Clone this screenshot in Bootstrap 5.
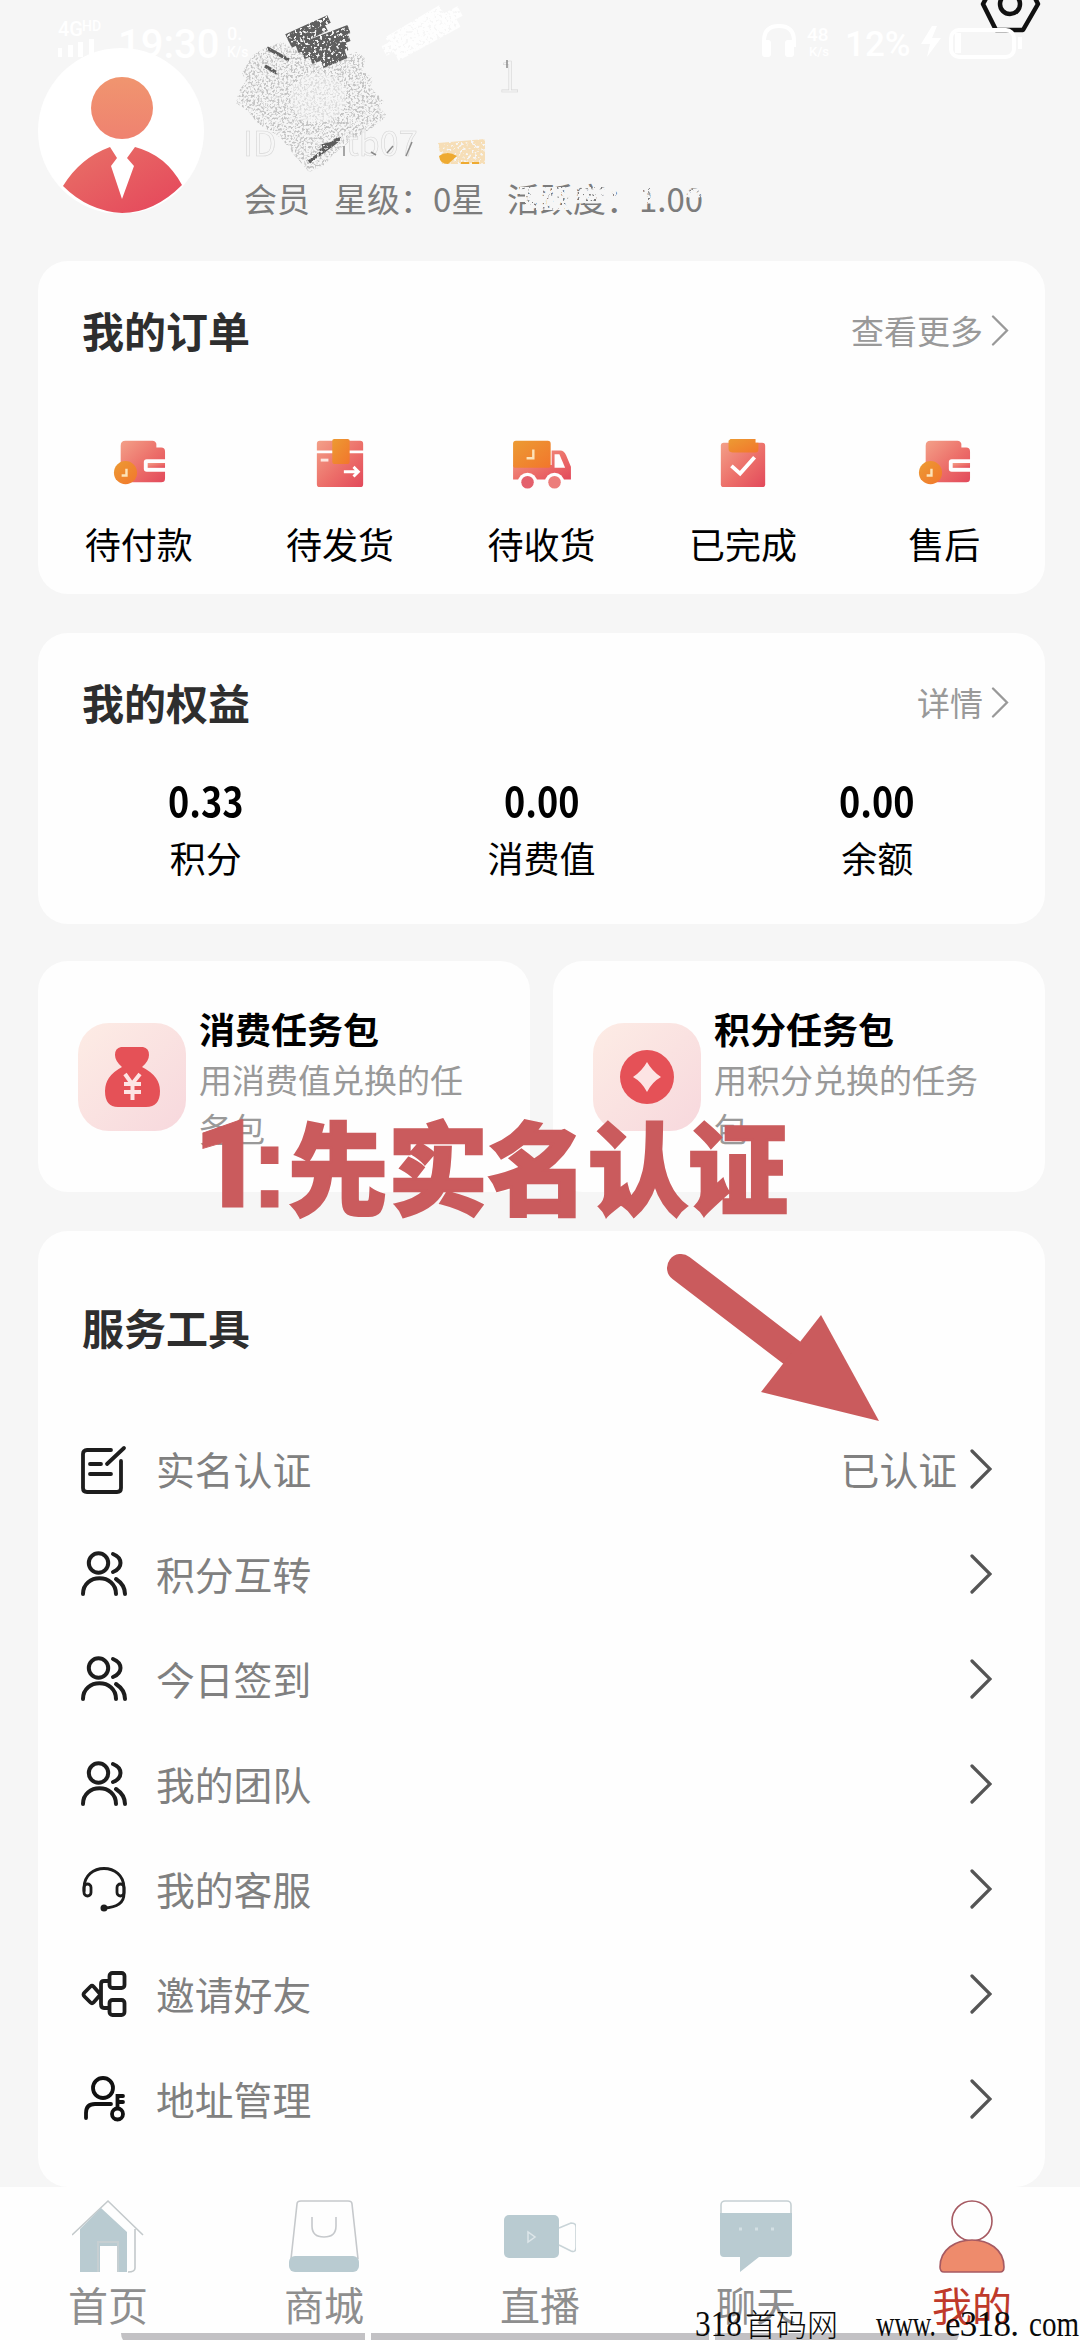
<!DOCTYPE html>
<html lang="zh-CN">
<head>
<meta charset="utf-8">
<meta name="viewport" content="width=device-width, initial-scale=1">
<title>我的</title>
<link href="https://cdn.jsdelivr.net/npm/bootstrap@5.3.0/dist/css/bootstrap.min.css" rel="stylesheet">
<style>
body{background:#f6f6f6;font-family:"Noto Sans CJK SC","Noto Sans",sans-serif;color:#000;width:1080px;height:2340px;overflow:hidden;position:relative}
svg{display:block;flex:none}
.page-head{height:261px;padding:47px 38px 0}
.avatar{width:166px;height:166px}
.member{font-size:33px;line-height:50px;color:#7c7c7c;white-space:pre}
.head-text{padding:126px 0 0 40px}
.status-layer,.scribble{position:absolute;left:0;top:0}
.panel{background:#fefefe;border:0;border-radius:30px;margin:0 35px 0 38px}
.p-title{font-size:42px;line-height:60px;font-weight:700;color:#2e2e2e}
.p-more{font-size:33px;line-height:50px;color:#999}
.p-head{padding:39px 36px 0 44px}
.orders{height:333px;margin-bottom:39px}
.order-item{font-size:36px;line-height:54px}
.order-item span{margin-top:26px}
.rights{height:291px;margin-bottom:37px}
.num{font-size:41px;line-height:54px;font-weight:700;transform:scaleX(.88);margin-bottom:4px}
.lbl{font-size:36px;line-height:54px}
.tasks{margin:0 35px 39px 38px;gap:23px}
.task{background:#fefefe;border-radius:30px;height:231px;flex:1 1 0;padding:0 30px 0 40px;gap:13px}
.task h3{font-size:36px;line-height:54px;font-weight:700;margin:0}
.task p{font-size:33px;line-height:49px;color:#999;margin:0;width:270px}
.tools{height:956px;padding-top:66px}
.tools .p-title{padding-left:44px;margin-bottom:59px}
.tool{height:105px;padding:0 53px 0 43px;font-size:38.8px;color:#808080}
.tool .name{margin:-1px auto 0 29px}
.tool .state{margin:-1px 13px 0 0}
.tabs{height:153px;background:#fefefe}
.tab{font-size:40px;line-height:56px;color:#8e8e8e;padding-top:12px}
.tab svg{margin-bottom:3px}
.tab.on{color:#bf3a2b}
.slogan{position:absolute;left:197px;top:1089px;font-size:100px;line-height:150px;font-weight:900;color:#ca5b5d;-webkit-text-stroke:2.5px #ca5b5d;white-space:nowrap}
.slogan b{font-family:Roboto,sans-serif;font-weight:900;font-size:122px;line-height:150px;display:inline-block;-webkit-text-stroke:1px #ca5b5d}
.slogan .one{width:58px;text-indent:-4px}
.slogan .colon{width:33px;font-family:"Liberation Sans",sans-serif;font-weight:700;font-size:118px;text-indent:-5px}
.pointer{position:absolute;left:650px;top:1240px}
.marks{position:absolute;left:0;bottom:0}
</style>
</head>
<body>
<svg width="0" height="0" class="position-absolute">
 <defs>
  <linearGradient id="gr" x1="0" y1="0" x2="1" y2="1"><stop offset="0" stop-color="#f3a088"/><stop offset=".55" stop-color="#ec6e69"/><stop offset="1" stop-color="#e2495b"/></linearGradient>
  <linearGradient id="go" x1="0" y1="0" x2="1" y2="1"><stop offset="0" stop-color="#ec9b33"/><stop offset="1" stop-color="#f2762c"/></linearGradient>
  <linearGradient id="gh" x1="0" y1="0" x2="0" y2="1"><stop offset="0" stop-color="#f0956f"/><stop offset="1" stop-color="#ef8270"/></linearGradient>
  <linearGradient id="gb" x1="0" y1="0" x2="1" y2="1"><stop offset="0" stop-color="#e87267"/><stop offset="1" stop-color="#e5455b"/></linearGradient>
  <linearGradient id="gp" x1="0" y1="0" x2="1" y2="1"><stop offset="0" stop-color="#fdece5"/><stop offset="1" stop-color="#f7d8dd"/></linearGradient>
  <filter id="grain" x="-10%" y="-10%" width="120%" height="120%"><feTurbulence type="fractalNoise" baseFrequency=".45" numOctaves="2" seed="4"/><feColorMatrix values="0 0 0 0 0 0 0 0 0 0 0 0 0 0 0 5 0 0 0 -2.3"/><feComposite in="SourceGraphic" operator="in"/></filter>
  <filter id="grain2" x="-10%" y="-10%" width="120%" height="120%"><feTurbulence type="fractalNoise" baseFrequency=".35" numOctaves="2" seed="9"/><feColorMatrix values="0 0 0 0 0 0 0 0 0 0 0 0 0 0 0 9 0 0 0 -3"/><feComposite in="SourceGraphic" operator="in"/></filter>
  <symbol id="wallet" viewBox="0 0 56 56">
   <path fill="url(#gr)" d="M9 10q0-5 5-5h28q3 0 4 3v4h5q4 0 4 4v8H36q-3 0-3 3v7q0 3 3 3h19v7q0 4-4 4H13q-4 0-4-4z"/>
   <path fill="url(#gr)" d="M37 28h18v5H37z"/><circle cx="14" cy="38" r="12" fill="url(#go)"/><path d="M15 34v7h-5" fill="none" stroke="#fde3b8" stroke-width="2.5"/>
  </symbol>
  <symbol id="parcel" viewBox="0 0 56 56">
   <path fill="url(#gr)" d="M4 15V8q0-3 3-3h42q3 0 3 3v7zM4 18h48v32q0 3-3 3H7q-3 0-3-3z"/>
   <rect x="20" y="3" width="18" height="26" rx="2" fill="url(#go)"/><path d="M8 25h8" stroke="#fde6e0" stroke-width="3"/><path d="M32 37h14m-4-5 5 5-5 5" fill="none" stroke="#fff" stroke-width="3"/>
  </symbol>
  <symbol id="truck" viewBox="0 0 60 56">
   <path fill="url(#gr)" d="M0 30h40V15h9q4 0 6 5l5 12v13H0z"/><path fill="#fefefe" d="M43 19h5l6 14H43z"/>
   <rect y="5" width="39" height="28" rx="3" fill="url(#go)"/><path d="M21 14v9h-7" fill="none" stroke="#fde3b8" stroke-width="2.5"/>
   <circle cx="15" cy="48" r="10" fill="#fefefe"/><circle cx="43" cy="48" r="10" fill="#fefefe"/><circle cx="15" cy="48" r="6.5" fill="#e4606c"/><circle cx="43" cy="48" r="6.5" fill="#ec7d7b"/>
  </symbol>
  <symbol id="done" viewBox="0 0 56 56">
   <rect x="5" y="7" width="46" height="46" rx="3" fill="url(#gr)"/><path fill="url(#go)" d="M15 3h26v4h3v7q0 3-3 3H17q-4 0-4-4V5z"/><path d="m16 31 9 8 15-17" fill="none" stroke="#fff" stroke-width="4"/>
  </symbol>
  <symbol id="chev" viewBox="0 0 22 40"><path d="M2 2 20 20 2 38" fill="none" stroke="currentColor" stroke-linecap="round"/></symbol>
  <symbol id="form" viewBox="0 0 46 50"><g fill="none" stroke="#1d1d1d" stroke-width="3.8" stroke-linecap="round"><path d="M30 6H6q-4 0-4 4v34q0 4 4 4h30q4 0 4-4V17M26 20 43 4M9 20h11M9 30h21"/></g></symbol>
  <symbol id="people" viewBox="0 0 46 46"><g fill="none" stroke="#1d1d1d" stroke-width="4" stroke-linecap="round"><circle cx="17.500" cy="12" r="9.700"/><path d="M2 43c0-21 33-21 33 0M32 3c10 4 10 14 0 18M35 28q9 6 9 15"/></g></symbol>
  <symbol id="headset" viewBox="0 0 46 46"><g fill="none" stroke="#1d1d1d" stroke-width="2.800" stroke-linecap="round"><path d="M3 25v-3C3-4 43-4 43 22v6Q43 41 23 42"/><rect x="3" y="18" width="7" height="12" rx="3.500"/><rect x="36" y="18" width="7" height="12" rx="3.500"/></g><circle cx="23" cy="42" r="3.500" fill="#1d1d1d"/></symbol>
  <symbol id="share" viewBox="0 0 46 46"><g fill="none" stroke="#1d1d1d" stroke-width="3.800"><rect x="28.500" y="2" width="15" height="15" rx="3"/><rect x="28.500" y="29" width="15" height="15" rx="3"/><path d="M28 10h-5q-3 0-3 3v20q0 4 3 4h5M2.500 23.500q0-1 1-2l6-6q1.500-1.500 3 0l7 8-7 8q-1.500 1.500-3 0l-6-6q-1-1-1-2z"/></g></symbol>
  <symbol id="userkey" viewBox="0 0 46 46"><g fill="none" stroke="#111" stroke-width="3.800" stroke-linecap="round"><circle cx="22" cy="12" r="10"/><path d="M5 42v-5q0-9 9-9h16"/><circle cx="36.500" cy="38" r="5.500"/><path d="M36.500 32V20H42M37 26h5"/></g></symbol>
 </defs>
</svg>

<header class="page-head d-flex">
 <svg class="avatar" viewBox="38 47 166 166"><circle cx="121" cy="131" r="83" fill="#fff"/><circle cx="122" cy="108" r="31" fill="url(#gh)"/>
  <path fill="url(#gb)" d="M63 186Q80 158 110 147l7 11-6 8 11 33 12-33-7-8 8-11q31 8 47 38-28 28-60 28-34-2-59-27z"/></svg>
 <div class="head-text"><div class="member d-flex"><span style="width:90px">会员</span><span style="width:173px">星级：0星</span><span>活跃度：1.00</span></div></div>
</header>
<svg class="scribble" width="1080" height="240">
 <g filter="url(#grain)"><path fill="#999" opacity=".55" d="M252 56l12-8 18-6 20 12 18 12 22-9 15-5 8 6-2 12 10 9-3 8 14 14-5 6 8 9-15 12-17 10-14 10-18 18-14 6-14-16-14-18-24-15-9-12-12-8 3-12 7-10-4-8z"/></g>
 <ellipse cx="318" cy="98" rx="28" ry="25" fill="#f6f6f6" opacity=".5"/>
 <g filter="url(#grain2)" fill="none" stroke="#5e5e5e" stroke-width="8.500"><path d="M287 38l42-19M290 44l36-17M297 49l52-20M303 55l46-18M311 60l36-14M322 64l24-10"/></g>
 <g filter="url(#grain2)" stroke="#5c5c5c" stroke-width="3.500" fill="none"><path d="M267 48l22 12M265 66l12 7M309 162l32-24M320 151l18-12M322 146l12-3"/></g>
 <g filter="url(#grain2)" fill="none" stroke="#fefefe" stroke-width="11"><path d="M388 42l54-32M384 51l76-40M396 56l62-34"/></g>
 <g font-size="34" fill="#f6f6f6" stroke="#c9c9c9" stroke-width=".6" opacity=".7"><text x="243" y="156">ID</text><text x="346" y="156">tb07</text><text x="498" y="92" font-size="42" font-weight="300">1</text></g>
 <path d="M344 146v10M371 152l5 3M387 153l6-7M406 156l6-14M507 60v8" stroke="#8a8a8a" stroke-width="1.500" fill="none"/>
 <g filter="url(#grain2)"><path fill="#f7c877" d="M438 143l47-4v25h-43z" opacity=".5"/></g><path fill="#eeaa31" d="M439 156q8-6 18 0l-9 8q-8 0-9-8zM461 162h8v2h-8zM472 162h7v2h-7z"/>
 <g filter="url(#grain2)" stroke="#f6f6f6" stroke-width="9"><path d="M520 190h96M525 199h102M524 208h50M641 189h26M643 199h16M685 193h18"/></g>
</svg>
<svg class="status-layer" width="1080" height="80" font-family="Roboto,sans-serif">
 <g fill="none" stroke="#111" stroke-width="4.500" stroke-linejoin="round"><path d="M983 4 997-22h28L1038 4l-15 26h-27z"/><circle cx="1010" cy="4" r="10"/></g>
 <g fill="#fff" font-weight="500"><text x="58" y="36" font-size="20">4G</text><text x="82" y="31" font-size="14">HD</text><path d="M58 48h4v9h-4zM68 45h5v12h-5zM78 42h5v15h-5zM89 39h5v18h-5z"/><text x="118" y="58" font-size="40">19:30</text><text x="227" y="40" font-size="18">0.</text><text x="227" y="57" font-size="14">K/s</text>
  <path d="M764 47V41q0-15 15-15t15 15v6" fill="none" stroke="#fff" stroke-width="4"/><rect x="762" y="40" width="9" height="17" rx="3"/><rect x="785" y="40" width="9" height="17" rx="3"/>
  <text x="807" y="41" font-size="19">48</text><text x="809" y="56" font-size="13">K/s</text><text x="845" y="56" font-size="35">12%</text><path d="m932 26-11 18h9l-3 13 14-19h-9l5-12z"/></g>
 <rect x="951" y="30" width="63" height="27" rx="8" fill="none" stroke="#fff" stroke-width="4"/><path d="M955 33h6v20h-6zM1018 37h4v12h-4z" fill="#fff"/>
</svg>

<section class="panel orders">
 <div class="p-head d-flex justify-content-between align-items-center"><div class="p-title">我的订单</div><div class="p-more d-flex align-items-center gap-2">查看更多 <svg width="18" height="31" stroke-width="3"><use href="#chev"/></svg></div></div>
 <div class="d-flex text-center" style="padding-top:76px">
  <div class="order-item col d-flex flex-column align-items-center"><svg width="54" height="54"><use href="#wallet"/></svg><span>待付款</span></div>
  <div class="order-item col d-flex flex-column align-items-center"><svg width="54" height="54"><use href="#parcel"/></svg><span>待发货</span></div>
  <div class="order-item col d-flex flex-column align-items-center"><svg width="58" height="54"><use href="#truck"/></svg><span>待收货</span></div>
  <div class="order-item col d-flex flex-column align-items-center"><svg width="54" height="54"><use href="#done"/></svg><span>已完成</span></div>
  <div class="order-item col d-flex flex-column align-items-center"><svg width="54" height="54"><use href="#wallet"/></svg><span>售后</span></div>
 </div>
</section>

<section class="panel rights">
 <div class="p-head d-flex justify-content-between align-items-center"><div class="p-title">我的权益</div><div class="p-more d-flex align-items-center gap-2">详情 <svg width="18" height="31" stroke-width="3"><use href="#chev"/></svg></div></div>
 <div class="d-flex text-center" style="padding-top:40px">
  <div class="col"><div class="num">0.33</div><div class="lbl">积分</div></div>
  <div class="col"><div class="num">0.00</div><div class="lbl">消费值</div></div>
  <div class="col"><div class="num">0.00</div><div class="lbl">余额</div></div>
 </div>
</section>

<div class="tasks d-flex">
 <div class="task d-flex align-items-center">
  <svg width="108" height="108"><rect width="108" height="108" rx="31" fill="url(#gp)"/><path fill="#e55157" d="M43 24h22q6 1 6 8 0 6-7 12 18 9 18 24 0 16-14 16H40q-13 0-13-16 0-15 17-24-7-6-7-12 0-7 6-8z"/><path d="m47 51 7 10 8-10M46 61h17M46 69h17M54.500 61v16" fill="none" stroke="#fde4e4" stroke-width="4"/></svg>
  <div><h3>消费任务包</h3><p>用消费值兑换的任务包</p></div>
 </div>
 <div class="task d-flex align-items-center">
  <svg width="108" height="108"><rect width="108" height="108" rx="31" fill="url(#gp)"/><circle cx="54" cy="54" r="27" fill="#e55157"/><path fill="#fde4e4" d="M54 39q5 9 14 15-9 5-14 15-5-10-14-15 9-6 14-15z"/></svg>
  <div><h3>积分任务包</h3><p>用积分兑换的任务包</p></div>
 </div>
</div>

<section class="panel tools">
 <div class="p-title">服务工具</div>
 <div class="tool d-flex align-items-center"><svg width="46" height="50"><use href="#form"/></svg><span class="name">实名认证</span><span class="state">已认证</span><svg width="22" height="40" stroke-width="3.200" color="#555"><use href="#chev"/></svg></div>
 <div class="tool d-flex align-items-center"><svg width="46" height="46"><use href="#people"/></svg><span class="name">积分互转</span><svg width="22" height="40" stroke-width="3.200" color="#555"><use href="#chev"/></svg></div>
 <div class="tool d-flex align-items-center"><svg width="46" height="46"><use href="#people"/></svg><span class="name">今日签到</span><svg width="22" height="40" stroke-width="3.200" color="#555"><use href="#chev"/></svg></div>
 <div class="tool d-flex align-items-center"><svg width="46" height="46"><use href="#people"/></svg><span class="name">我的团队</span><svg width="22" height="40" stroke-width="3.200" color="#555"><use href="#chev"/></svg></div>
 <div class="tool d-flex align-items-center"><svg width="46" height="46"><use href="#headset"/></svg><span class="name">我的客服</span><svg width="22" height="40" stroke-width="3.200" color="#555"><use href="#chev"/></svg></div>
 <div class="tool d-flex align-items-center"><svg width="46" height="46"><use href="#share"/></svg><span class="name">邀请好友</span><svg width="22" height="40" stroke-width="3.200" color="#555"><use href="#chev"/></svg></div>
 <div class="tool d-flex align-items-center"><svg width="46" height="46"><use href="#userkey"/></svg><span class="name">地址管理</span><svg width="22" height="40" stroke-width="3.200" color="#555"><use href="#chev"/></svg></div>
</section>

<nav class="tabs d-flex">
 <div class="tab col d-flex flex-column align-items-center"><svg width="72" height="74" viewBox="0 0 72 74"><path d="M0 36 36 2l35 34M63 30v39q0 4-7 4" fill="none" stroke="#c3c9cb" stroke-width="1.600"/><path fill="#b9cbd1" d="M8 30 29 9l26 24v40H45V47H28v26H8z"/><path d="M26 73V43h20v30" fill="none" stroke="#c6cfd2" stroke-width="2"/></svg>首页</div>
 <div class="tab col d-flex flex-column align-items-center"><svg width="72" height="74" viewBox="0 0 72 74"><path d="M3 60 9 5q0-3 4-3h47q4 0 4 3l6 55M24 18v9q0 11 12 11t12-11v-9" fill="none" stroke="#c6c9cc" stroke-width="1.600"/><rect x="1" y="57" width="70" height="16" rx="6" fill="#b9cbd1"/></svg>商城</div>
 <div class="tab col d-flex flex-column align-items-center"><svg width="72" height="74" viewBox="0 0 72 74"><rect y="16" width="55" height="43" rx="5" fill="#b9cbd1"/><path d="M55 29l12-5q5 0 5 4v20q0 6-5 4l-12-6" fill="none" stroke="#c9d4d8" stroke-width="1.600"/><path d="M24 33v10l7-5z" fill="none" stroke="#dde6e9" stroke-width="1.500"/></svg>直播</div>
 <div class="tab col d-flex flex-column align-items-center"><svg width="72" height="74" viewBox="0 0 72 74"><rect x="1" y="2" width="70" height="40" rx="4" fill="none" stroke="#c6d0d3" stroke-width="1.600"/><path fill="#b9cbd1" d="M0 14h72v40q0 4-4 4H39L20 73V58H4q-4 0-4-4z"/><path d="M19 30h3M35 30h3M51 30h3" stroke="#d3dfe3" stroke-width="3"/></svg>聊天</div>
 <div class="tab on col d-flex flex-column align-items-center"><svg width="72" height="74" viewBox="0 0 72 74"><g stroke="#a65a62" stroke-width="1.600"><circle cx="36" cy="22" r="20" fill="none"/><path fill="#ee8b6c" d="M4 68C4 32 68 32 68 68q0 5-4 5H8q-4 0-4-5z"/></g></svg>我的</div>
</nav>

<div class="slogan"><b class="one">1</b><b class="colon">:</b>先实名认证</div>
<svg class="pointer" width="240" height="190" viewBox="650 1240 240 190"><path d="M681 1268 800 1359" stroke="#ca5b5d" stroke-width="28" stroke-linecap="round"/><path fill="#ca5b5d" d="M821 1315 879 1421 761 1392z"/></svg>
<svg class="marks" width="1080" height="40" viewBox="0 2300 1080 40">
 <path fill="#c2c1c4" d="M121 2333h244v7H123q-2-3-2-7zM371 2333h338v7H371zM715 2333h244q0 4-2 7H715z"/>
 <g fill="#0a0a0a" font-family="'Liberation Serif','Noto Sans CJK SC',serif" font-size="35"><text x="695" y="2336" textLength="47" lengthAdjust="spacingAndGlyphs">318</text><text x="745" y="2336" font-size="31" font-weight="300" textLength="93">首码网</text><text x="876" y="2336" textLength="60" lengthAdjust="spacingAndGlyphs">www.</text><text x="945" y="2336" textLength="74" lengthAdjust="spacing">e318.</text><text x="1029" y="2336" textLength="50" lengthAdjust="spacingAndGlyphs">com</text></g>
</svg>
<script src="https://cdn.jsdelivr.net/npm/bootstrap@5.3.0/dist/js/bootstrap.bundle.min.js"></script>
</body>
</html>
